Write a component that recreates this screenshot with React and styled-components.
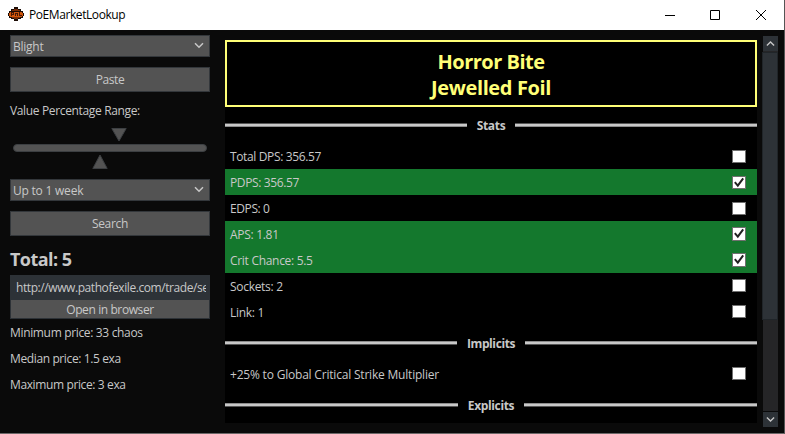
import React from "react";
import styled, { createGlobalStyle } from "styled-components";

const GlobalStyle = createGlobalStyle`
  * { box-sizing: border-box; }
  body { margin: 0; background: #0a0a0a; overflow: hidden; }
`;

const Window = styled.div`
  width: 785px;
  height: 434px;
  display: flex;
  flex-direction: column;
  background: #0a0a0a;
  border-right: 1px solid #555;
  border-bottom: 1px solid #6b6868;
  color: #c8c8c8;
  font: 12px/16px "Open Sans", "Noto Sans", sans-serif;
`;

const Text = styled.span`
  display: block;
  white-space: pre;
  letter-spacing: ${(p) => p.$ls ?? -0.3}px;
`;

const TitleBar = styled.header`
  flex: none;
  height: 30px;
  width: 784px;
  background: #fff;
  color: #000;
  display: flex;
  align-items: center;
  padding-left: 8px;
`;

const AppIcon = styled.svg`
  width: 16px;
  height: 16px;
  margin: -2px 5px 0 0;
`;

const WindowControls = styled.div`
  margin-left: auto;
  margin-right: -1px;
  display: flex;
  height: 28px;
`;

const Control = styled.svg`
  width: 46px;
  height: 28px;
  fill: none;
  stroke: #000;
`;

const Body = styled.main`
  flex: 1;
  min-height: 0;
  display: flex;
`;

const Sidebar = styled.aside`
  width: 225px;
  padding: 5px 15px 0 10px;
  display: flex;
  flex-direction: column;
`;

const Select = styled.div`
  flex: none;
  height: 22px;
  border: 1px solid #33373b;
  background: #535353;
  display: flex;
  align-items: center;
  justify-content: space-between;
  padding: 2px 5px 0 2px;
`;

const Chevron = styled.svg`
  width: 10px;
  height: 7px;
  margin-top: -3px;
  fill: none;
  stroke: #c8c8c8;
  stroke-width: 1.5;
`;

const Button = styled.button`
  flex: none;
  height: 25px;
  margin: 10px 0 0;
  padding: 1px 0 0;
  border: 1px solid #33373b;
  background: #535353;
  color: inherit;
  font: inherit;
  display: flex;
  align-items: center;
  justify-content: center;
`;

const FieldLabel = styled.div`
  margin-top: 11px;
  height: 16px;
`;

const Slider = styled.div`
  flex: none;
  margin: 8px 3px 0;
  height: 52px;
  display: flex;
  flex-direction: column;
`;

const Track = styled.div`
  height: 8px;
  margin: 2px 0;
  border: 1px solid #3c3f42;
  border-radius: 4px;
  background: #535353;
`;

const Thumb = styled.svg`
  width: 16px;
  height: 15px;
  margin-left: ${(p) => p.$offset}px;
  fill: #535353;
  stroke: #3c3f42;
`;

const Total = styled.h2`
  flex: none;
  margin: 11px 0 0;
  height: 28px;
  font-size: 18px;
  line-height: 24px;
  font-weight: 700;
`;

const ResultLink = styled.div`
  flex: none;
  height: 44px;
  padding: 0 1px 1px;
  background: #2d3237;
`;

const Url = styled.div`
  height: 25px;
  margin: 0 3px 0 5px;
  padding-top: 5px;
  overflow: hidden;
`;

const OpenButton = styled(Button)`
  width: 100%;
  height: 18px;
  margin: 0;
  border: 0;
`;

const Prices = styled.div`
  margin-top: 6px;
  display: grid;
  gap: 10px;
`;

const Item = styled.section`
  width: 532px;
  height: 383px;
  margin-top: 10px;
  background: #000;
  overflow: hidden;
`;

const ItemHeader = styled.h1`
  margin: 0;
  height: 67px;
  padding-top: 7px;
  border: 2px solid #ffff77;
  color: #ffff77;
  font-size: 20px;
  line-height: 26px;
  font-weight: 700;
  text-align: center;
`;

const Divider = styled.div`
  height: 36px;
  display: flex;
  align-items: center;
  gap: 10px;
  font-weight: 700;
  ${Text} { padding-top: 2px; }
  &::before, &::after {
    content: "";
    flex: 1;
    height: 2px;
    background: #c8c8c8;
    border-top: 1px solid ${(p) => (p.$late ? "#8c8c8c" : "#555")};
    border-bottom: 1px solid ${(p) => (p.$late ? "#555" : "#8c8c8c")};
  }
`;

const Row = styled.label`
  height: 26px;
  padding: 0 11px 0 5px;
  display: flex;
  align-items: center;
  justify-content: space-between;
  background: ${(p) => (p.$checked ? "#14782d" : "transparent")};
  ${Text} { padding-top: 2px; }
`;

const Box = styled.span`
  width: 14px;
  height: ${(p) => (p.$tall ? 14 : 13)}px;
  border: 1px solid #707070;
  background: #fff;
  display: flex;
  margin-top: ${(p) => p.$shift ?? 1}px;
`;

const Check = styled.svg`
  width: 12px;
  height: 11px;
  fill: none;
  stroke: #212121;
  stroke-width: 2;
`;

const Scrollbar = styled.div`
  width: 16px;
  height: 391px;
  margin: 6px 0 0 5px;
  display: flex;
  flex-direction: column;
  align-items: center;
  background: linear-gradient(90deg, transparent 1px, #252527 1px, #252527 16px);
`;

const ScrollButton = styled.div`
  width: 15px;
  height: 15px;
  margin-left: 1px;
  background: #2d3237;
  display: flex;
  align-items: center;
  justify-content: center;
  ${Chevron} { margin: 0; width: 9px; }
`;

const ScrollThumb = styled.div`
  width: 16px;
  height: 268px;
  margin-top: 1px;
  background: #2d3237;
  border: 1px solid #202529;
`;

const ScrollGap = styled.div`
  width: 16px;
  height: 1px;
  margin-top: auto;
  background: #0a0a0a;
`;

const Down = () => (
  <Chevron viewBox="0 0 10 7"><path d="M1 1.2 5 5.2 9 1.2" /></Chevron>
);

const Stat = ({ label, ls, checked, tall, shift }) => (
  <Row $checked={checked}>
    <Text $ls={ls}>{label}</Text>
    <Box $tall={tall} $shift={shift}>
      {checked && (
        <Check viewBox="0 0 12 11"><path d="M1.8 5.2 4.8 8.6 10.2 1.4" /></Check>
      )}
    </Box>
  </Row>
);

export default function App() {
  return (
    <>
      <GlobalStyle />
      <Window>
        <TitleBar>
          <AppIcon viewBox="0 0 16 16" shapeRendering="crispEdges">
            <path fill="#1c0d06" d="M6 1h4v2h3v2h2v2h1v3h-1v2h-2v1h-3v2H6v-2H3v-1H1v-2H0V7h1V5h2V3h3z" />
            <path fill="#7a2e08" d="M6 3h4v1h2v1H4V4h2zM4 11h8v1h-2v1H6v-1H4z" />
            <path fill="#d0560b" d="M2 6h12v1h1v3h-1v1H2v-1H1V7h1z" />
            <path fill="none" stroke="#4a1a06" d="M3.5 10V6.5h2v2h-2M7.500 10V6.500M8.500 7v1M9.500 10V6.500M11.500 6v3.500h2" />
          </AppIcon>
          <Text $ls={-0.42}>PoEMarketLookup</Text>
          <WindowControls>
            <Control viewBox="0 0 46 28"><path d="M18 14.500h10" /></Control>
            <Control viewBox="0 0 46 28"><path d="M17.500 9.500h9v9h-9z" /></Control>
            <Control viewBox="0 0 46 28"><path d="M17 9l10 10M27 9 17 19" /></Control>
          </WindowControls>
        </TitleBar>
        <Body>
          <Sidebar>
            <Select><Text $ls={-0.25}>Blight</Text><Down /></Select>
            <Button><Text $ls={-0.4}>Paste</Text></Button>
            <FieldLabel><Text $ls={-0.35}>Value Percentage Range:</Text></FieldLabel>
            <Slider>
              <Thumb $offset={98} viewBox="0 0 16 15"><path d="M.8 1.500h14.400L8 14z" /></Thumb>
              <Track />
              <Thumb $offset={79} viewBox="0 0 16 15"><path d="M.8 14.500h14.400L8 1z" /></Thumb>
            </Slider>
            <Select><Text $ls={-0.22}>Up to 1 week</Text><Down /></Select>
            <Button><Text>Search</Text></Button>
            <Total><Text $ls={-0.55}>Total: 5</Text></Total>
            <ResultLink>
              <Url><Text $ls={-0.42}>http://www.pathofexile.com/trade/se</Text></Url>
              <OpenButton><Text $ls={-0.4}>Open in browser</Text></OpenButton>
            </ResultLink>
            <Prices>
              <Text $ls={-0.34}>Minimum price: 33 chaos</Text>
              <Text $ls={-0.38}>Median price: 1.5 exa</Text>
              <Text $ls={-0.38}>Maximum price: 3 exa</Text>
            </Prices>
          </Sidebar>
          <Item>
            <ItemHeader>
              <Text $ls={-0.5}>Horror Bite</Text>
              <Text $ls={-0.38}>Jewelled Foil</Text>
            </ItemHeader>
            <Divider><Text>Stats</Text></Divider>
            <Stat label="Total DPS: 356.57" ls={-0.36} shift={0} />
            <Stat label="PDPS: 356.57" ls={-0.38} checked shift={0} />
            <Stat label="EDPS: 0" ls={-0.4} shift={0} />
            <Stat label="APS: 1.81" checked tall shift={0} />
            <Stat label="Crit Chance: 5.5" checked tall shift={0} />
            <Stat label="Sockets: 2" shift={-1} />
            <Stat label="Link: 1" shift={-1} />
            <Divider $late><Text $ls={-0.4}>Implicits</Text></Divider>
            <Stat label="+25% to Global Critical Strike Multiplier" ls={-0.2} shift={-1} />
            <Divider $late><Text $ls={-0.35}>Explicits</Text></Divider>
          </Item>
          <Scrollbar>
            <ScrollButton>
              <Chevron viewBox="0 0 10 7"><path d="M1 5.800 5 1.800 9 5.800" /></Chevron>
            </ScrollButton>
            <ScrollThumb />
            <ScrollGap />
            <ScrollButton><Down /></ScrollButton>
          </Scrollbar>
        </Body>
      </Window>
    </>
  );
}
